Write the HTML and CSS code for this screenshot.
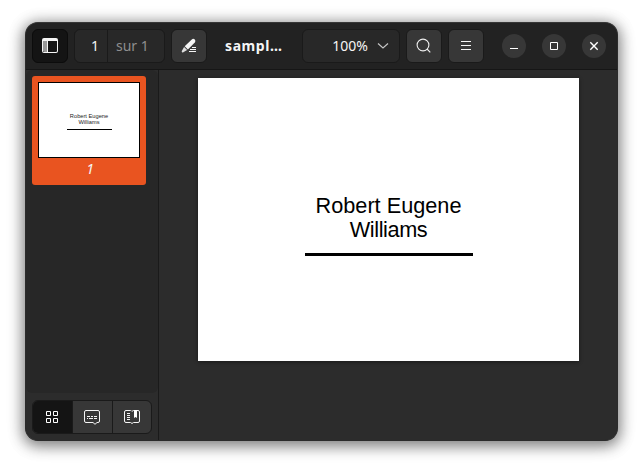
FILE: index.html
```html
<!DOCTYPE html>
<html lang="fr">
<head>
<meta charset="utf-8">
<title>sample</title>
<link rel="stylesheet" href="styles.css">
</head>
<body>
<div class="window">
  <header class="header">
    <button class="btn active" aria-label="Panneau"><svg width="16" height="16" viewBox="0 0 16 16"><path d="M1 3h5v11H2.500L1 13z" fill="#999"/><path d="M2 0h12q2 0 2 2v11q0 2-2 2H2q-2 0-2-2V2q0-2 2-2zM1 3v10q0 1 1 1h3V3zM6 3v11h8q1 0 1-1V3z" fill="#f5f5f5" fill-rule="evenodd"/></svg></button>
    <div class="pager"><span class="current">1</span><span class="total">sur 1</span></div>
    <button class="btn" aria-label="Annoter"><svg width="16" height="16" viewBox="0 0 16 16" fill="#f5f5f5"><path d="M10.800 1.500q1.500-1.300 3 .1 1.300 1.400 0 2.900L6.900 11.400 3.700 8.300z"/><path d="M3.100 9l3 3L1.900 14.500q-1.600.3-1.100-1.400z" fill="#ddd"/><path d="M11 9h4v1h-4zM9 11h6v1H9zM8 13h7v1H8z"/></svg></button>
    <h1 class="title">sampl…</h1>
    <div class="zoom"><span>100%</span><svg width="12" height="8" viewBox="0 0 12 8" fill="none" stroke="#c4c4c4"><path d="M1 1.500L6 6l5-4.500" stroke-width="1.200"/></svg></div>
    <button class="btn" aria-label="Rechercher"><svg width="16" height="16" viewBox="0 0 16 16" fill="none" stroke="#eee" stroke-width="1.100"><circle cx="7" cy="7" r="5.900"/><path d="M11 11l3.300 3.300"/></svg></button>
    <button class="btn" aria-label="Menu"><svg width="16" height="16" viewBox="0 0 16 16" fill="#f5f5f5"><path d="M3 3h10v1H3zM3 7h10v1H3zM3 11h10v1H3z"/></svg></button>
    <div class="controls">
      <button class="round" aria-label="Réduire"><svg width="10" height="10" viewBox="0 0 10 10"><path d="M1 7h8v1H1z" fill="#fff"/></svg></button>
      <button class="round" aria-label="Agrandir"><svg width="10" height="10" viewBox="0 0 10 10"><path d="M1.500 1.500h7v7h-7z" fill="none" stroke="#fff"/></svg></button>
      <button class="round" aria-label="Fermer"><svg width="10" height="10" viewBox="0 0 10 10"><path d="M1.300 1.300l7.400 7.400M8.700 1.300L1.300 8.700" stroke="#fff" stroke-width="1.400"/></svg></button>
    </div>
  </header>
  <div class="content">
    <aside class="sidebar">
      <div class="thumbs">
        <div class="thumb">
          <div class="mini"><p>Robert Eugene<br>Williams</p><div class="mini-rule"></div></div>
          <span class="number">1</span>
        </div>
      </div>
      <div class="switcher">
        <button class="selected" aria-label="Vignettes"><svg width="12" height="12" viewBox="0 0 12 12" fill="none" stroke="#fff"><path d="M.5.5h4v4h-4zM7.500.5h4v4h-4zM.5 7.500h4v4h-4zM7.500 7.500h4v4h-4z"/></svg></button>
        <button aria-label="Annotations"><svg width="16" height="16" viewBox="0 0 16 16" fill="none" stroke="#f5f5f5"><path d="M2 1.500h12q1.500 0 1.500 1.500v9q0 1.500-1.500 1.500h-1l-2 1.800-2-1.800H2Q.5 13.500.5 12V3Q.5 1.500 2 1.500z"/><path d="M3 7.500h3M7 7.500h2M10 7.500h3M3 9.500h1M5 9.500h4M10 9.500h3"/></svg></button>
        <button aria-label="Signets"><svg width="16" height="16" viewBox="0 0 16 16" fill="none" stroke="#f5f5f5"><path d="M7.500 2L6.500 1.500H2Q.5 1.500.5 3v9q0 1.500 1.500 1.500h4.500L8 14.500l1.500-1H14q1.500 0 1.500-1.500V3q0-1.500-1.500-1.500H9.500L8 2.300"/><path d="M3 4.500h3M3 6.500h3M3 8.500h3M3 10.500h3"/><path d="M10 1h3v8l-1.500-1L10 9z" fill="#fff" stroke="none"/></svg></button>
      </div>
    </aside>
    <main class="viewer">
      <article class="page"><p>Robert Eugene</p><p class="surname">Williams</p><div class="rule"></div></article>
    </main>
  </div>
</div>
</body>
</html>
```
FILE: styles.css
```css
* { box-sizing: border-box; }
body {
  margin: 0;
  padding: 22px 25px 28px;
  height: 469px;
  background: #fff;
  overflow: hidden;
  color: #f5f5f5;
  font: 14px "Noto Sans", sans-serif;
}
button { padding: 0; margin: 0; }
svg { display: block; }
.window {
  display: flex;
  flex-direction: column;
  width: 593px;
  height: 419px;
  background: #2c2c2c;
  border: 1px solid #2b2b2b;
  border-top-color: #363636;
  border-radius: 13px;
  overflow: hidden;
  box-shadow: 0 3px 14px 2px rgba(0, 0, 0, .45), 0 3px 18px 3px rgba(0, 0, 0, .1);
}
.header {
  display: flex;
  flex: none;
  align-items: center;
  height: 47px;
  padding: 0 11px 1px 6px;
  background: #222;
  border-bottom: 1px solid #161616;
}
.btn {
  display: flex;
  flex: none;
  align-items: center;
  justify-content: center;
  width: 36px;
  height: 34px;
  background: #373737;
  border: 1px solid #1a1a1a;
  border-radius: 6px;
}
.btn.active { background: #141414; border-color: #0c0c0c; }
.btn + .btn { margin-left: 6px; }
.pager {
  display: flex;
  width: 91px;
  height: 34px;
  margin: 0 6px;
  line-height: 31px;
  background: #282828;
  border: 1px solid #1a1a1a;
  border-radius: 6px;
}
.current { width: 33px; padding-right: 8px; text-align: right; border-right: 1px solid #1a1a1a; }
.total { padding-left: 8px; color: #8f8f8f; }
.title {
  width: 95px;
  margin: 0;
  padding-left: 18px;
  font-size: 14px;
  line-height: 34px;
  letter-spacing: .6px;
  white-space: nowrap;
}
.zoom {
  display: flex;
  align-items: center;
  justify-content: flex-end;
  gap: 9px;
  width: 98px;
  height: 34px;
  padding-right: 10px;
  margin-right: 6px;
  background: #282828;
  border: 1px solid #1a1a1a;
  border-radius: 6px;
}
.controls { display: flex; gap: 16px; margin-left: auto; }
.round {
  display: flex;
  align-items: center;
  justify-content: center;
  width: 24px;
  height: 24px;
  background: #373737;
  border: 0;
  border-radius: 50%;
}
.content { display: flex; flex: 1; min-height: 0; }
.sidebar {
  display: flex;
  flex-direction: column;
  width: 133px;
  border-right: 1px solid #1a1a1a;
}
.thumbs { flex: 1; padding: 6px; background: #272727; border-radius: 6px; }
.thumb {
  width: 114px;
  height: 109px;
  padding: 6px;
  text-align: center;
  background: #e95420;
  border-radius: 3px;
}
.mini {
  height: 76px;
  padding-top: 30px;
  color: #222;
  background: #fff;
  border: 1px solid #000;
  font: 5.700px/6px "Liberation Sans", sans-serif;
}
.mini p { margin: 0; }
.mini-rule { width: 45px; height: 1px; margin: 4px auto 0; background: #000; }
.number { display: block; padding-left: 2px; font-size: 14px; font-style: italic; line-height: 22px; }
.switcher {
  display: flex;
  flex: none;
  width: 120px;
  height: 34px;
  margin: 7px 6px 6px;
  background: #373737;
  border: 1px solid #1a1a1a;
  border-radius: 6px;
  overflow: hidden;
}
.switcher button {
  display: flex;
  flex: none;
  width: 39px;
  align-items: center;
  justify-content: center;
  padding-right: 1px;
  background: none;
  border: 0;
}
.switcher button + button { width: 40px; padding-right: 2px; border-left: 1px solid #1a1a1a; }
.switcher .selected { background: #141414; }
.viewer { flex: 1; padding: 8px 38px 0 39px; }
.page {
  height: 283px;
  padding-top: 116px;
  color: #000;
  text-align: center;
  background: #fff;
  box-shadow: 0 1px 4px rgba(0, 0, 0, .45);
  font: 21.700px/24px "Liberation Sans", sans-serif;
}
.page p { margin: 0; }
.page .surname { letter-spacing: -.4px; }
.rule { width: 168px; height: 3px; margin: 11px auto 0; background: #000; }
```
